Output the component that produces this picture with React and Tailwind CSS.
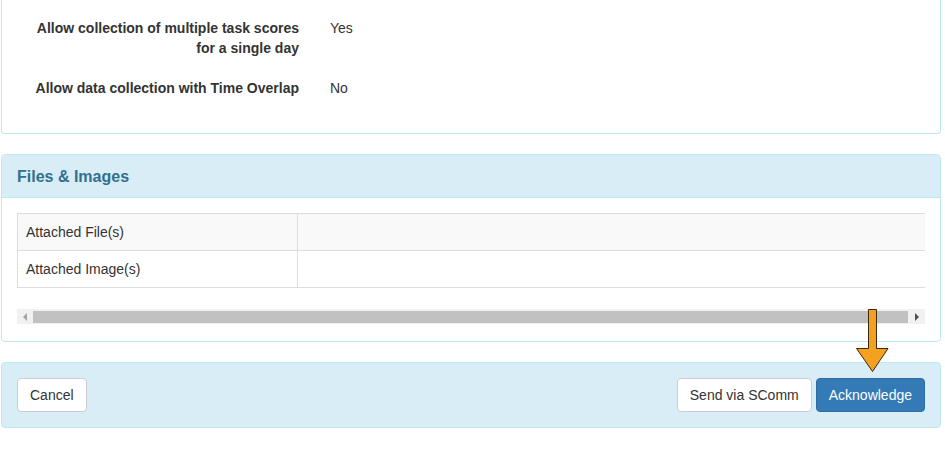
import React from "react";

export default function App() {
  return (
    <div
      className="relative w-[945px] h-[450px] bg-white text-[#333] text-[14px] leading-[20px] overflow-hidden"
      style={{ fontFamily: '"Liberation Sans", Arial, Helvetica, sans-serif' }}
    >
      {/* Top panel (cut off) */}
      <div className="ml-[1px] w-[940px] h-[134px] border-x border-b border-[#bce8f1] rounded-b-[4px] pt-[18px]">
        <div className="flex flex-col gap-[20px]">
          <div className="flex">
            <div className="ml-[22px] w-[275px] text-right font-bold">
              Allow collection of multiple task scores for a single day
            </div>
            <div className="ml-[31px]">Yes</div>
          </div>
          <div className="flex">
            <div className="ml-[22px] w-[275px] text-right font-bold">
              Allow data collection with Time Overlap
            </div>
            <div className="ml-[31px]">No</div>
          </div>
        </div>
      </div>

      {/* Files & Images panel */}
      <div className="mt-[20px] ml-[1px] w-[940px] border border-[#bce8f1] rounded-[4px]">
        <div className="h-[43px] bg-[#d9edf7] border-b border-[#bce8f1] rounded-t-[3px] flex items-center px-[15px] pt-[2px]">
          <span className="text-[16px] font-bold text-[#31708f]">Files &amp; Images</span>
        </div>
        <div className="pt-[15px] px-[15px] pb-[17px]">
          <div className="overflow-hidden">
            <table className="w-[1200px] border-collapse">
              <tbody>
                <tr className="bg-[#f9f9f9]">
                  <td className="w-[280px] border border-[#ddd] px-[8px] py-[8px]">Attached File(s)</td>
                  <td className="border border-[#ddd] px-[8px] py-[8px]"></td>
                </tr>
                <tr>
                  <td className="w-[280px] border border-[#ddd] px-[8px] py-[8px]">Attached Image(s)</td>
                  <td className="border border-[#ddd] px-[8px] py-[8px]"></td>
                </tr>
              </tbody>
            </table>
          </div>
          {/* scrollbar */}
          <div className="mt-[21px] h-[15px] bg-[#f1f1f1] flex items-stretch">
            <div className="w-[16px] flex items-center justify-center">
              <svg width="6" height="8" viewBox="0 0 6 8">
                <polygon points="5,0 5,8 1,4" fill="#a3a3a3" />
              </svg>
            </div>
            <div className="flex-1 pt-[2px] pb-[1px]">
              <div className="h-full bg-[#c1c1c1]" />
            </div>
            <div className="w-[17px] flex items-center justify-center">
              <svg width="6" height="8" viewBox="0 0 6 8">
                <polygon points="1,0 1,8 5,4" fill="#505050" />
              </svg>
            </div>
          </div>
        </div>
      </div>

      {/* Footer panel */}
      <div className="mt-[20px] ml-[1px] w-[940px] border border-[#bce8f1] rounded-[4px] bg-[#d9edf7] p-[15px] flex items-center">
        <button className="h-[34px] px-[12px] bg-white border border-[#ccc] rounded-[4px] text-[#333]">
          Cancel
        </button>
        <div className="ml-auto flex gap-[4px]">
          <button className="h-[34px] px-[12px] bg-white border border-[#ccc] rounded-[4px] text-[#333]">
            Send via SComm
          </button>
          <button className="h-[34px] px-[12px] bg-[#337ab7] border border-[#2e6da4] rounded-[4px] text-white">
            Acknowledge
          </button>
        </div>
      </div>

      {/* Arrow annotation */}
      <svg
        className="absolute left-[855px] top-[308px]"
        width="36"
        height="66"
        viewBox="0 0 36 66"
      >
        <polygon
          points="13.5,1.5 21.5,1.5 21.5,40.5 33,40.5 17.5,63.5 1.5,40.5 13.5,40.5"
          fill="#f4a020"
          stroke="#3b2a0c"
          strokeWidth="1"
          strokeLinejoin="miter"
        />
      </svg>
    </div>
  );
}
